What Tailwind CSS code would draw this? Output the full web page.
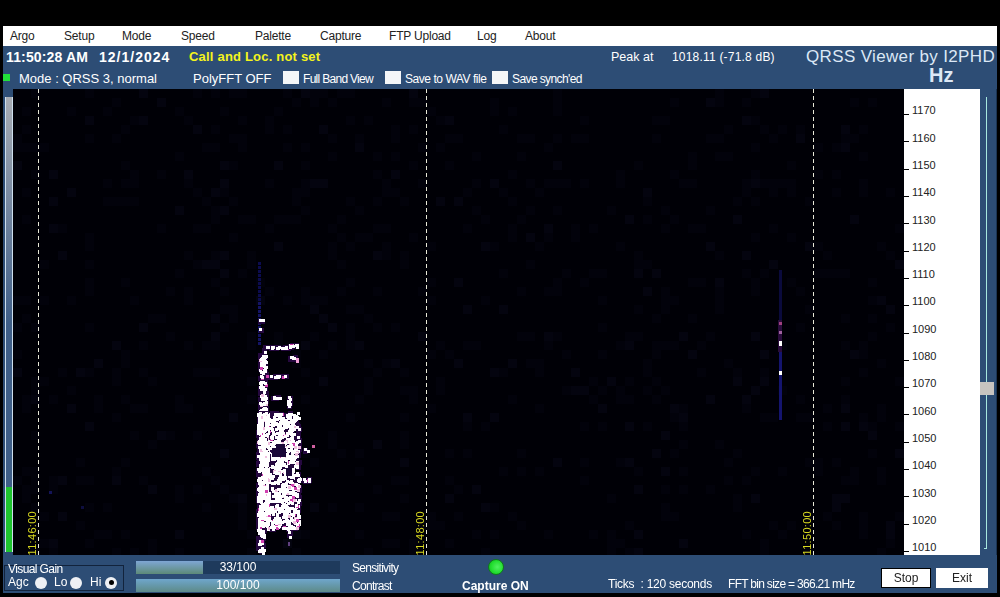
<!DOCTYPE html>
<html lang="en">
<head>
  <meta charset="UTF-8" />
  <title>QRSS Viewer by I2PHD</title>
  <script src="https://cdn.jsdelivr.net/npm/@tailwindcss/browser@4"></script>
</head>
<body class="bg-black h-[597px] w-[1000px] overflow-hidden font-['Liberation_Sans',Arial,sans-serif]">
  <div class="pt-[26px] pl-[3px] pr-[3px] w-[1000px]">
    <!-- menu bar -->
    <div class="h-5 bg-white flex items-center pl-[7px] text-[12px] tracking-[-0.2px] text-[#222]">
      <span class="w-[54px]">Argo</span>
      <span class="w-[58px]">Setup</span>
      <span class="w-[59px]">Mode</span>
      <span class="w-[74px]">Speed</span>
      <span class="w-[65px]">Palette</span>
      <span class="w-[69px]">Capture</span>
      <span class="w-[88px]">FTP Upload</span>
      <span class="w-[48px]">Log</span>
      <span>About</span>
    </div>

    <div class="bg-[#2d4d75] h-[547px] text-white">
      <!-- status row -->
      <div class="h-[22px] flex items-center relative">
        <span class="ml-[3px] w-[93px] text-[14px] font-bold tracking-[0.15px] whitespace-nowrap">11:50:28 AM</span>
        <span class="w-[90px] text-[14px] font-bold tracking-[1px]">12/1/2024</span>
        <span class="w-[422px] text-[13px] font-bold tracking-[0.2px] text-[#f4f41c]">Call and Loc. not set</span>
        <span class="w-[61px] text-[12.5px]">Peak at</span>
        <span class="w-[134px] text-[12px] tracking-[0.2px] whitespace-nowrap">1018.11 (-71.8 dB)</span>
        <span class="text-[17px] tracking-[0.35px] whitespace-nowrap text-[#dce8f6]">QRSS Viewer by I2PHD</span>
      </div>
      <!-- options row -->
      <div class="h-[21px] flex items-center relative">
        <span class="w-[7px] h-[7px] bg-[#22e03a] mb-[2px]"></span>
        <span class="ml-[9px] w-[174px] text-[13px] whitespace-nowrap">Mode : QRSS 3, normal</span>
        <span class="w-[90px] text-[13px] whitespace-nowrap">PolyFFT OFF</span>
        <span class="w-4 h-[13px] bg-[#f4f6f8] mb-[2px]"></span>
        <span class="ml-1 w-[82px] text-[12px] tracking-[-0.7px] whitespace-nowrap">Full Band View</span>
        <span class="w-4 h-[13px] bg-[#f4f6f8] mb-[2px]"></span>
        <span class="ml-1 w-[87px] text-[12px] tracking-[-0.45px] whitespace-nowrap">Save to WAV file</span>
        <span class="w-4 h-[13px] bg-[#f4f6f8] mb-[2px]"></span>
        <span class="ml-1 w-[417px] text-[12px] tracking-[-0.6px] whitespace-nowrap">Save synch'ed</span>
        <span class="text-[20px] font-bold leading-none mb-[7px] text-[#dce8f6]">Hz</span>
      </div>

      <!-- plot row -->
      <div class="h-[466px] flex">
        <div class="w-[10px] pl-[2px] pt-2 pb-[3px]">
          <div class="h-full w-2 border-x border-[#cfe0ee] flex flex-col bg-gradient-to-b from-[#a8adb4] via-[#3f5f88] to-[#3f5f88]">
            <div class="flex-1"></div>
            <div class="h-[65px] bg-[#1fc52f]"></div>
          </div>
        </div>
        <div class="w-[891px] relative bg-[#000006]">
          <canvas id="fall" width="891" height="466" class="absolute inset-0"></canvas>
          <div class="absolute top-0 bottom-0 left-[25px] w-px bg-[repeating-linear-gradient(to_bottom,#e8e8d8_0,#e8e8d8_4px,transparent_4px,transparent_7px)]"></div>
          <div class="absolute top-0 bottom-0 left-[413px] w-px bg-[repeating-linear-gradient(to_bottom,#e8e8d8_0,#e8e8d8_4px,transparent_4px,transparent_7px)]"></div>
          <div class="absolute top-0 bottom-0 left-[800px] w-px bg-[repeating-linear-gradient(to_bottom,#e8e8d8_0,#e8e8d8_4px,transparent_4px,transparent_7px)]"></div>
          <span class="absolute bottom-0 left-[13px] [writing-mode:vertical-rl] rotate-180 text-[11px] leading-[12px] tracking-[0.3px] text-[#d8d820]">11:46:00</span>
          <span class="absolute bottom-0 left-[401px] [writing-mode:vertical-rl] rotate-180 text-[11px] leading-[12px] tracking-[0.3px] text-[#d8d820]">11:48:00</span>
          <span class="absolute bottom-0 left-[788px] [writing-mode:vertical-rl] rotate-180 text-[11px] leading-[12px] tracking-[0.3px] text-[#d8d820]">11:50:00</span>
        </div>
        <!-- frequency scale -->
        <div class="w-[76px] bg-white flex flex-col pt-2 overflow-hidden text-[11px] text-[#222]">
          <div class="h-[27.3px] shrink-0 flex items-center"><i class="w-[5px] h-px bg-black mt-2"></i><span class="ml-[3px]">1170</span></div>
          <div class="h-[27.3px] shrink-0 flex items-center"><i class="w-[5px] h-px bg-black mt-2"></i><span class="ml-[3px]">1160</span></div>
          <div class="h-[27.3px] shrink-0 flex items-center"><i class="w-[5px] h-px bg-black mt-2"></i><span class="ml-[3px]">1150</span></div>
          <div class="h-[27.3px] shrink-0 flex items-center"><i class="w-[5px] h-px bg-black mt-2"></i><span class="ml-[3px]">1140</span></div>
          <div class="h-[27.3px] shrink-0 flex items-center"><i class="w-[5px] h-px bg-black mt-2"></i><span class="ml-[3px]">1130</span></div>
          <div class="h-[27.3px] shrink-0 flex items-center"><i class="w-[5px] h-px bg-black mt-2"></i><span class="ml-[3px]">1120</span></div>
          <div class="h-[27.3px] shrink-0 flex items-center"><i class="w-[5px] h-px bg-black mt-2"></i><span class="ml-[3px]">1110</span></div>
          <div class="h-[27.3px] shrink-0 flex items-center"><i class="w-[5px] h-px bg-black mt-2"></i><span class="ml-[3px]">1100</span></div>
          <div class="h-[27.3px] shrink-0 flex items-center"><i class="w-[5px] h-px bg-black mt-2"></i><span class="ml-[3px]">1090</span></div>
          <div class="h-[27.3px] shrink-0 flex items-center"><i class="w-[5px] h-px bg-black mt-2"></i><span class="ml-[3px]">1080</span></div>
          <div class="h-[27.3px] shrink-0 flex items-center"><i class="w-[5px] h-px bg-black mt-2"></i><span class="ml-[3px]">1070</span></div>
          <div class="h-[27.3px] shrink-0 flex items-center"><i class="w-[5px] h-px bg-black mt-2"></i><span class="ml-[3px]">1060</span></div>
          <div class="h-[27.3px] shrink-0 flex items-center"><i class="w-[5px] h-px bg-black mt-2"></i><span class="ml-[3px]">1050</span></div>
          <div class="h-[27.3px] shrink-0 flex items-center"><i class="w-[5px] h-px bg-black mt-2"></i><span class="ml-[3px]">1040</span></div>
          <div class="h-[27.3px] shrink-0 flex items-center"><i class="w-[5px] h-px bg-black mt-2"></i><span class="ml-[3px]">1030</span></div>
          <div class="h-[27.3px] shrink-0 flex items-center"><i class="w-[5px] h-px bg-black mt-2"></i><span class="ml-[3px]">1020</span></div>
          <div class="h-[27.3px] shrink-0 flex items-center"><i class="w-[5px] h-px bg-black mt-2"></i><span class="ml-[3px]">1010</span></div>
        </div>
        <!-- contrast slider -->
        <div class="w-[17px] relative border-r border-[#1c3554]">
          <div class="absolute top-2 bottom-[6px] left-[6px] w-px bg-[#a8e8e0]"></div>
          <div class="absolute bottom-[6px] left-[4px] w-[3px] h-px bg-[#a8e8e0]"></div>
          <div class="absolute top-[293px] left-0 w-[14px] h-[13px] bg-[#c8c4c0]"></div>
        </div>
      </div>

      <!-- bottom controls -->
      <div class="h-[38px] flex relative">
        <div class="mt-[10px] ml-[1px] w-[120px] h-[26px] border border-[#12233c] text-[12px] leading-[13px] pl-[3px]">
          <div class="-mt-[3px] tracking-[-0.6px]">Visual Gain</div>
          <div class="flex items-center">
            <span class="w-[27px]">Agc</span>
            <span class="w-3 h-3 rounded-full bg-[#eef0f4]"></span>
            <span class="w-[23px] pl-[7px]">Lo</span>
            <span class="w-3 h-3 rounded-full bg-[#eef0f4]"></span>
            <span class="w-[23px] pl-[8px]">Hi</span>
            <span class="w-3 h-3 rounded-full bg-[#eef0f4] flex items-center justify-center"><i class="w-[5px] h-[5px] rounded-full bg-black"></i></span>
          </div>
        </div>
        <div class="ml-[12px] w-[204px] pt-[6px] flex flex-col gap-[5px] text-[12px] leading-[13px] text-center">
          <div class="relative h-[13px] bg-[#1e3a5c]">
            <div class="absolute inset-y-0 left-0 w-[67px] bg-gradient-to-b from-[#7fa6d4] to-[#5d8a78]"></div>
            <span class="relative">33/100</span>
          </div>
          <div class="relative h-[13px] bg-gradient-to-b from-[#6fa6cc] to-[#5d8a88]">
            <span class="relative">100/100</span>
          </div>
        </div>
        <div class="ml-[12px] w-[110px] pt-[7px] flex flex-col gap-[5px] text-[12px] leading-[13px] tracking-[-0.7px]">
          <span>Sensitivity</span>
          <span>Contrast</span>
        </div>
        <div class="w-[146px] flex flex-col items-start pt-[4px]">
          <span class="ml-[26px] w-4 h-4 rounded-full border border-[#0f7a1a] bg-[radial-gradient(circle_at_60%_50%,#50f060_0,#1fdc2c_60%,#12a020_100%)]"></span>
          <span class="text-[12px] font-bold leading-[14px] mt-[4px] whitespace-nowrap">Capture ON</span>
        </div>
        <div class="mt-[22px] flex text-[12px] leading-[14px] whitespace-nowrap">
          <span class="w-[120px] tracking-[-0.25px]">Ticks &nbsp;: 120 seconds</span>
          <span class="w-[153px] tracking-[-0.7px]">FFT bin size = 366.21 mHz</span>
        </div>
        <div class="mt-[13px] flex gap-[5px] text-[12px] leading-[18px] text-[#222] text-center">
          <button class="w-[50px] h-5 bg-white border border-black">Stop</button>
          <button class="w-[52px] h-5 bg-white">Exit</button>
        </div>
      </div>
    </div>
  </div>

  <script>
    // waterfall drawn from a seeded generator, so each render is the same
    const ctx = document.getElementById('fall').getContext('2d');
    let seed = 12345;
    function rnd() { seed = (seed * 16807) % 2147483647; return seed / 2147483647; }
    const OX = 13, OY = 89;
    function px(x, y, w, h, c) { ctx.fillStyle = c; ctx.fillRect(x - OX, y - OY, w, h); }

    // faint noise blocks
    for (let y = 89; y < 555; y += 9) {
      for (let x = 13; x < 904; x += 9) {
        const r = rnd();
        if (r > 0.85) px(x, y, 9, 9, r > 0.97 ? '#04040f' : '#02020b');
      }
    }

    function splat(x0, y0, x1, y1, fill) {
      const n = Math.round((x1 - x0 + 1) * (y1 - y0 + 1) * fill / 4);
      for (let i = 0; i < n; i++) {
        const x = Math.round(x0 + rnd() * (x1 - x0));
        const y = Math.round(y0 + rnd() * (y1 - y0));
        px(x - 1, y - 1, 5, 5, '#25083f');
      }
      for (let i = 0; i < n; i++) {
        const x = Math.round(x0 + rnd() * (x1 - x0));
        const y = Math.round(y0 + rnd() * (y1 - y0));
        const r = rnd();
        px(x, y, 3, 3, r > 0.1 ? '#fff' : (r > 0.04 ? '#f0c0e0' : '#d040b0'));
      }
    }

    ctx.filter = 'blur(0.5px)';

    // left signal: faint blue tail at the top, then the tracks
    for (let y = 262; y < 345; y += 4) px(258, y, 3, 3, y < 300 ? '#0c0c50' : '#141466');
    splat(258, 319, 262, 321, 0.8);
    splat(258, 328, 260, 329, 0.8);
    splat(259, 348, 265, 410, 0.75);
    splat(264, 346, 288, 347, 1.2);
    splat(288, 344, 296, 346, 1.6);
    splat(289, 356, 296, 358, 0.9);
    px(296, 358, 3, 5, '#f0a0d8');
    splat(263, 375, 286, 376, 0.8);
    splat(272, 396, 285, 397, 0.7);
    splat(287, 396, 289, 405, 1);

    // main body, with its dark holes
    splat(257, 412, 271, 528, 1.3);
    splat(270, 412, 298, 528, 0.75);
    px(272, 448, 14, 9, '#1a0838');
    px(276, 444, 9, 4, '#1a0838');
    px(286, 468, 6, 8, '#1a0838');
    splat(296, 478, 308, 480, 1);
    splat(304, 448, 309, 450, 0.5);
    px(312, 445, 3, 3, '#d060a0');
    splat(257, 528, 263, 553, 0.55);
    splat(287, 530, 289, 538, 0.25);
    px(288, 542, 2, 4, '#604080');

    // right signal
    for (let y = 270; y < 418; y += 3) px(779, y, 3, 3, y > 322 ? '#14146e' : '#0a0a3c');
    px(778, 320, 4, 32, '#2a0c3c');
    px(779, 322, 3, 3, '#a04080');
    px(779, 331, 3, 3, '#a060a0');
    px(779, 341, 3, 5, '#fff');
    px(779, 371, 3, 4, '#fff');

    // stray dots
    px(49, 491, 3, 3, '#141458');
    px(81, 506, 3, 3, '#0e0e40');
  </script>
</body>
</html>
